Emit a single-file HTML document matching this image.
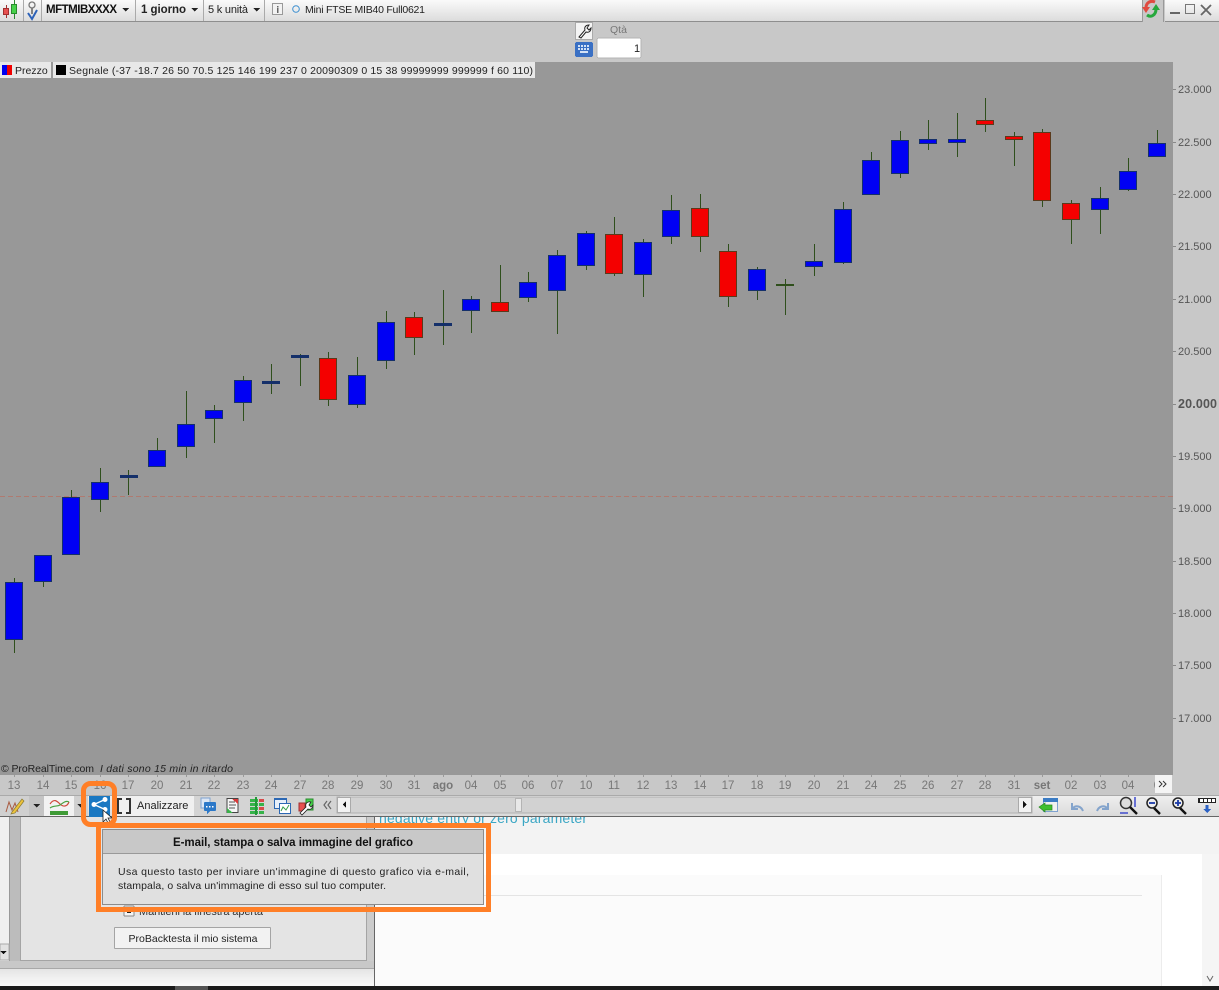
<!DOCTYPE html>
<html><head><meta charset="utf-8"><style>
html,body{margin:0;padding:0;width:1219px;height:990px;overflow:hidden;background:#fff;font-family:"Liberation Sans",sans-serif;color:#222}
svg text{font-family:"Liberation Sans",sans-serif}
</style></head><body>
<svg width="1219" height="990" viewBox="0 0 1219 990" xmlns="http://www.w3.org/2000/svg" style="position:absolute;left:0;top:0;display:block" shape-rendering="crispEdges">
<defs>
<linearGradient id="top" x1="0" y1="0" x2="0" y2="1"><stop offset="0" stop-color="#fafafa"/><stop offset="1" stop-color="#dcdcdc"/></linearGradient>
<linearGradient id="tb" x1="0" y1="0" x2="0" y2="1"><stop offset="0" stop-color="#f0f0f0"/><stop offset="1" stop-color="#dadada"/></linearGradient>
<linearGradient id="foot" x1="0" y1="0" x2="0" y2="1"><stop offset="0" stop-color="#e4e4e4"/><stop offset="1" stop-color="#fbfbfb"/></linearGradient>
</defs>

<!-- lower page -->
<rect x="0" y="817" width="1219" height="173" fill="#f3f3f3"/>
<rect x="375" y="854" width="827" height="132" fill="#fff"/>
<rect x="375" y="875" width="787" height="111" fill="#fbfbfb"/>
<rect x="375" y="895" width="767" height="1" fill="#e4e4e4"/>
<rect x="1161" y="875" width="1" height="111" fill="#ececec"/>
<rect x="1202" y="854" width="17" height="132" fill="#f5f5f5"/>
<path d="M1207 976l3 5 3-5" fill="none" stroke="#666" stroke-width="1" shape-rendering="auto"/>
<text x="379" y="823" font-size="14" fill="#3aa6c4" textLength="208">negative entry or zero parameter</text>

<!-- left panel -->
<rect x="0" y="817" width="375" height="169" fill="#e0e0e0"/>
<rect x="10" y="817" width="10" height="151" fill="#bcbcbc"/>
<rect x="0" y="817" width="10" height="144" fill="#f0f0f0"/>
<rect x="9" y="817" width="1" height="144" fill="#999"/>
<rect x="20.500" y="816.500" width="346" height="144" fill="#e4e4e4" stroke="#a4a4a4" stroke-width="1"/>
<rect x="367" y="817" width="8" height="151" fill="#cccccc"/>
<rect x="0" y="961" width="375" height="7" fill="#c8c8c8"/>
<rect x="0" y="968" width="375" height="1" fill="#a8a8a8"/>
<rect x="0" y="969" width="375" height="17" fill="url(#foot)"/>
<rect x="374" y="817" width="1" height="170" fill="#666"/>
<rect x="0" y="944" width="9" height="16" fill="#e2e2e2" stroke="#aaa"/>
<path d="M0 951h7l-3.500 3z" fill="#111"/>
<rect x="124" y="906" width="10" height="10" rx="1" fill="#f4f4f4" stroke="#888"/>
<rect x="127" y="909" width="4" height="4" fill="#222"/>
<text x="139" y="915" font-size="11" fill="#333" textLength="124">Mantieni la finestra aperta</text>
<rect x="114.500" y="927.500" width="156" height="21" rx="1" fill="#f2f2f2" stroke="#a4a4a4"/>
<text x="193" y="942" font-size="10.500" fill="#222" text-anchor="middle">ProBacktesta il mio sistema</text>
<rect x="0" y="986" width="1219" height="4" fill="#1c1c1c"/>
<rect x="175" y="986" width="33" height="4" fill="#555"/>

<!-- app frame -->
<rect x="0" y="0" width="1219" height="22" fill="#c8c8c8"/>
<rect x="0" y="0" width="1142" height="21" fill="url(#top)"/>
<rect x="0" y="21" width="1142" height="1" fill="#8e8e8e"/>
<rect x="1165" y="0" width="54" height="21" fill="url(#top)"/>
<rect x="1165" y="21" width="54" height="1" fill="#8e8e8e"/>
<rect x="1142" y="0" width="1" height="22" fill="#999"/>
<rect x="1163" y="0" width="1" height="22" fill="#999"/>
<rect x="0" y="22" width="1219" height="40" fill="#c8c8c8"/>
<rect x="1173" y="62" width="46" height="713" fill="#c8c8c8"/>
<rect x="0" y="62" width="1173" height="713" fill="#989898"/>
<rect x="0" y="775" width="1219" height="20" fill="#c8c8c8"/>
<rect x="0" y="795" width="1219" height="21" fill="url(#tb)"/>
<rect x="0" y="795" width="1219" height="1" fill="#aaa"/>
<rect x="0" y="816" width="1219" height="1" fill="#666"/>

<!-- top bar separators -->
<g fill="#aaa"><rect x="23" y="0" width="1" height="21"/><rect x="41" y="0" width="1" height="21"/><rect x="135" y="0" width="1" height="21"/><rect x="203" y="0" width="1" height="21"/><rect x="264" y="0" width="1" height="21"/></g>
<!-- candle icon -->
<path d="M6.500 5v13" stroke="#a03030"/><rect x="3.500" y="8.500" width="5" height="6" fill="#e85050" stroke="#a03030"/>
<path d="M14.500 0v19" stroke="#2a8a2e"/><rect x="11.500" y="4.500" width="5" height="9" fill="#46d24a" stroke="#2a8a2e"/>
<!-- lock/check icon -->
<g shape-rendering="auto"><circle cx="32" cy="5" r="3" fill="none" stroke="#777" stroke-width="1.300"/><path d="M32 8v6" stroke="#777" stroke-width="1.800"/><path d="M28 13l4 6 5-9" fill="none" stroke="#2d62b8" stroke-width="2"/></g>
<text x="46" y="13" font-size="11.500" font-weight="bold" fill="#111" textLength="71">MFTMIBXXXX</text>
<path d="M122 8h7l-3.500 3.500z" fill="#222"/>
<text x="141" y="13" font-size="11.500" font-weight="bold" fill="#222" textLength="45">1 giorno</text>
<path d="M191 8h7l-3.500 3.500z" fill="#222"/>
<text x="208" y="13" font-size="11" fill="#222" textLength="40">5 k unità</text>
<path d="M253 8h7l-3.500 3.500z" fill="#222"/>
<rect x="272.500" y="3.500" width="10" height="11" fill="#f2f2f2" stroke="#999"/>
<rect x="277" y="6" width="1.500" height="1.500" fill="#666"/><rect x="277" y="8" width="1.500" height="5" fill="#666"/>
<circle cx="296" cy="9" r="3.300" fill="none" stroke="#3c8fd0" stroke-width="1" shape-rendering="auto"/>
<text x="305" y="13" font-size="10.500" fill="#222" textLength="120">Mini FTSE MIB40 Full0621</text>

<!-- refresh icon + window controls -->
<g shape-rendering="auto">
<path d="M1155 2c-5-2-9 1-9 6" fill="none" stroke="#e04a40" stroke-width="3"/><path d="M1142 7h8l-4 6z" fill="#e04a40"/>
<path d="M1147 15c4 3 9 0 9-6" fill="none" stroke="#26a83c" stroke-width="3"/><path d="M1152 10h8l-4-6z" fill="#26a83c"/>
<path d="M1201 5l10 10M1211 5l-10 10" stroke="#666" stroke-width="1.800"/>
</g>
<rect x="1170" y="12" width="10" height="2" fill="#666"/>
<rect x="1185.500" y="4.500" width="9" height="9" fill="none" stroke="#777"/>

<!-- Qta area -->
<rect x="575.500" y="22.500" width="17" height="17" fill="#f4f4f4" stroke="#aaa"/>
<path d="M579 37l6-7c-1-3 1-5 4-5l-2 3 2 2 2-2c0 3-2 5-5 4l-5 6z" fill="#fff" stroke="#222" stroke-width="1" shape-rendering="auto"/>
<text x="610" y="33" font-size="10.500" fill="#777">Qtà</text>
<rect x="575" y="42" width="18" height="15" rx="2" fill="#3a70c4"/>
<g fill="#d4e2f6"><rect x="578" y="45" width="2" height="2"/><rect x="581" y="45" width="2" height="2"/><rect x="584" y="45" width="2" height="2"/><rect x="587" y="45" width="2" height="2"/><rect x="578" y="48" width="2" height="2"/><rect x="581" y="48" width="2" height="2"/><rect x="584" y="48" width="2" height="2"/><rect x="587" y="48" width="2" height="2"/><rect x="580" y="51" width="8" height="2"/></g>
<rect x="597" y="38" width="44" height="20" rx="2" fill="#fff" stroke="#b4b4b4"/>
<text x="634" y="52" font-size="11" fill="#222">1</text>

<!-- legend -->
<rect x="0" y="62" width="535" height="16" fill="#e8e8e8"/>
<rect x="51" y="62" width="2" height="16" fill="#989898"/>
<rect x="2" y="65" width="5" height="10" fill="#0000f0"/><rect x="7" y="65" width="5" height="10" fill="#f00000"/>
<text x="15" y="74" font-size="10.500" fill="#222">Prezzo</text>
<rect x="56" y="65" width="10" height="10" fill="#000"/>
<text x="69" y="74" font-size="10.500" fill="#222" textLength="464">Segnale (-37 -18.7 26 50 70.5 125 146 199 237 0 20090309 0 15 38 99999999 999999 f 60 110)</text>

<!-- dashed line -->
<line x1="0" y1="496.500" x2="1173" y2="496.500" stroke="#b07a70" stroke-width="1" stroke-dasharray="5 3"/>

<!-- candles: wicks -->
<g stroke="#2f4f1c" stroke-width="1">
<path d="M14.500 578V653M43.500 555V587M71.500 490V555M100.500 468V512M128.500 470V495M157.500 438V466M186.500 391V458M214.500 405V443M243.500 376V421M271.500 364V394M300.500 354V386M328.500 352V406M357.500 357V408M386.500 311V369M414.500 312V355M443.500 290V345M471.500 296V333M500.500 265V312M528.500 272V302M557.500 250V334M586.500 231V270M614.500 217V276M643.500 239V297M671.500 195V244M700.500 194V252M728.500 244V307M757.500 267V300M785.500 279V315M814.500 244V276M843.500 202V264M871.500 152V194M900.500 131V178M928.500 120V150M957.500 113V157M985.500 98V132M1014.500 132V166M1042.500 129V207M1071.500 200V244M1100.500 187V234M1128.500 158V191M1157.500 130V157"/>
</g>
<!-- blue bodies -->
<g fill="#0000f4" stroke="#15306a" stroke-width="1">
<rect x="5.500" y="582.500" width="17" height="57"/><rect x="34.500" y="555.500" width="17" height="26"/><rect x="62.500" y="497.500" width="17" height="57"/><rect x="91.500" y="482.500" width="17" height="17"/><rect x="148.500" y="450.500" width="17" height="16"/><rect x="177.500" y="424.500" width="17" height="22"/><rect x="205.500" y="410.500" width="17" height="8"/><rect x="234.500" y="380.500" width="17" height="22"/><rect x="348.500" y="375.500" width="17" height="29"/><rect x="377.500" y="322.500" width="17" height="38"/><rect x="462.500" y="299.500" width="17" height="11"/><rect x="519.500" y="282.500" width="17" height="15"/><rect x="548.500" y="255.500" width="17" height="35"/><rect x="577.500" y="233.500" width="17" height="32"/><rect x="634.500" y="242.500" width="17" height="32"/><rect x="662.500" y="210.500" width="17" height="26"/><rect x="748.500" y="269.500" width="17" height="21"/><rect x="805.500" y="261.500" width="17" height="5"/><rect x="834.500" y="209.500" width="17" height="53"/><rect x="862.500" y="160.500" width="17" height="34"/><rect x="891.500" y="140.500" width="17" height="33"/><rect x="919.500" y="139.500" width="17" height="4"/><rect x="948.500" y="139.500" width="17" height="3"/><rect x="1091.500" y="198.500" width="17" height="11"/><rect x="1119.500" y="171.500" width="17" height="18"/><rect x="1148.500" y="143.500" width="17" height="13"/>
</g>
<!-- dojis -->
<g fill="#15306a">
<rect x="120" y="475" width="18" height="3"/><rect x="262" y="381" width="18" height="3"/><rect x="291" y="355" width="18" height="3"/><rect x="434" y="323" width="18" height="3"/>
</g>
<rect x="776" y="284" width="18" height="2" fill="#2f4f1c"/>
<!-- red bodies -->
<g fill="#f40000" stroke="#5a3a1c" stroke-width="1">
<rect x="319.500" y="358.500" width="17" height="41"/><rect x="405.500" y="317.500" width="17" height="20"/><rect x="491.500" y="302.500" width="17" height="9"/><rect x="605.500" y="234.500" width="17" height="39"/><rect x="691.500" y="208.500" width="17" height="28"/><rect x="719.500" y="251.500" width="17" height="45"/><rect x="976.500" y="120.500" width="17" height="4"/><rect x="1005.500" y="136.500" width="17" height="3"/><rect x="1033.500" y="132.500" width="17" height="68"/><rect x="1062.500" y="203.500" width="17" height="16"/>
</g>

<!-- price axis -->
<g fill="#555" font-size="11">
<text x="1178" y="93">23.000</text><text x="1178" y="146">22.500</text><text x="1178" y="198">22.000</text><text x="1178" y="250">21.500</text><text x="1178" y="303">21.000</text><text x="1178" y="355">20.500</text><text x="1178" y="408" font-weight="bold" font-size="12.500" textLength="39">20.000</text><text x="1178" y="460">19.500</text><text x="1178" y="512">19.000</text><text x="1178" y="565">18.500</text><text x="1178" y="617">18.000</text><text x="1178" y="669">17.500</text><text x="1178" y="722">17.000</text>
</g>
<g fill="#888"><rect x="1173" y="89" width="3" height="1"/><rect x="1173" y="142" width="3" height="1"/><rect x="1173" y="194" width="3" height="1"/><rect x="1173" y="246" width="3" height="1"/><rect x="1173" y="299" width="3" height="1"/><rect x="1173" y="351" width="3" height="1"/><rect x="1173" y="404" width="3" height="1"/><rect x="1173" y="456" width="3" height="1"/><rect x="1173" y="508" width="3" height="1"/><rect x="1173" y="561" width="3" height="1"/><rect x="1173" y="613" width="3" height="1"/><rect x="1173" y="665" width="3" height="1"/><rect x="1173" y="718" width="3" height="1"/></g>

<!-- copyright -->
<text x="1" y="772" font-size="10.500" fill="#222" textLength="93">© ProRealTime.com</text>
<text x="100" y="772" font-size="10.500" font-style="italic" fill="#222" textLength="133">I dati sono 15 min in ritardo</text>

<!-- date axis -->
<path d="M14.500 775v2M43.500 775v2M71.500 775v2M100.500 775v2M128.500 775v2M157.500 775v2M186.500 775v2M214.500 775v2M243.500 775v2M271.500 775v2M300.500 775v2M328.500 775v2M357.500 775v2M386.500 775v2M414.500 775v2M443.500 775v2M471.500 775v2M500.500 775v2M528.500 775v2M557.500 775v2M586.500 775v2M614.500 775v2M643.500 775v2M671.500 775v2M700.500 775v2M728.500 775v2M757.500 775v2M785.500 775v2M814.500 775v2M843.500 775v2M871.500 775v2M900.500 775v2M928.500 775v2M957.500 775v2M985.500 775v2M1014.500 775v2M1042.500 775v2M1071.500 775v2M1100.500 775v2M1128.500 775v2" stroke="#999"/>
<g fill="#777" font-size="11.500" text-anchor="middle">
<text x="14" y="789">13</text><text x="43" y="789">14</text><text x="71" y="789">15</text><text x="100" y="789">16</text><text x="128" y="789">17</text><text x="157" y="789">20</text><text x="186" y="789">21</text><text x="214" y="789">22</text><text x="243" y="789">23</text><text x="271" y="789">24</text><text x="300" y="789">27</text><text x="328" y="789">28</text><text x="357" y="789">29</text><text x="386" y="789">30</text><text x="414" y="789">31</text><text x="443" y="789" font-weight="bold">ago</text><text x="471" y="789">04</text><text x="500" y="789">05</text><text x="528" y="789">06</text><text x="557" y="789">07</text><text x="586" y="789">10</text><text x="614" y="789">11</text><text x="643" y="789">12</text><text x="671" y="789">13</text><text x="700" y="789">14</text><text x="728" y="789">17</text><text x="757" y="789">18</text><text x="785" y="789">19</text><text x="814" y="789">20</text><text x="843" y="789">21</text><text x="871" y="789">24</text><text x="900" y="789">25</text><text x="928" y="789">26</text><text x="957" y="789">27</text><text x="985" y="789">28</text><text x="1014" y="789">31</text><text x="1042" y="789" font-weight="bold">set</text><text x="1071" y="789">02</text><text x="1100" y="789">03</text><text x="1128" y="789">04</text><text x="1157" y="789">0</text>
</g>
<rect x="1155" y="775" width="17" height="18" fill="#f4f4f4"/>
<path d="M1159 781l3 3-3 3M1163 781l3 3-3 3" fill="none" stroke="#333" shape-rendering="auto"/>

<!-- bottom toolbar -->
<rect x="0" y="796" width="29" height="20" fill="#d0d0d0"/>
<rect x="29" y="796" width="15" height="20" fill="#c4c4c4"/>
<rect x="44" y="796" width="30" height="20" fill="#f2f2f2"/>
<rect x="74" y="796" width="14" height="20" fill="#d0d0d0"/>
<rect x="116" y="796" width="78" height="20" fill="#f0f0f0"/>
<rect x="194" y="796" width="146" height="20" fill="#d4d4d4"/>
<g shape-rendering="auto">
<path d="M6 812l3-10 3 8 3-7 3 9" fill="none" stroke="#a85a40" stroke-width="1"/>
<path d="M12 812l10-13 2 2-9 12-4 1z" fill="#ecc23c" stroke="#8a7a30" stroke-width=".7"/>
<path d="M50 804c4-6 7-3 10 0s7 3 9-2" fill="none" stroke="#d04a3c" stroke-width="1.200"/>
<path d="M50 808c4-3 7-1 10-3s6-5 9-3" fill="none" stroke="#49a13f" stroke-width="1.200"/>
</g>
<path d="M50 811h18v4H50z" fill="#3f9b36"/>
<path d="M33 804h7l-3.500 3.500z" fill="#222"/>
<path d="M77 804h7l-3.500 3.500z" fill="#222"/>
<rect x="89" y="796" width="21" height="21" fill="#1a78c2"/>
<g shape-rendering="auto">
<circle cx="94" cy="804.500" r="2.500" fill="#fff"/><circle cx="105" cy="799.500" r="2.500" fill="#fff"/><circle cx="105" cy="809.500" r="2.500" fill="#fff"/>
<path d="M94 804.500L105 799.500M94 804.500L105 809.500" stroke="#fff" stroke-width="1.300"/>
<path d="M103 810v12l3-3 2 4 2-1-2-4h4z" fill="#fff" stroke="#222" stroke-width=".8"/>
</g>
<path d="M122 799h-4v14h4M126 799h4v14h-4" fill="none" stroke="#333" stroke-width="2"/>
<text x="137" y="809" font-size="11" fill="#222">Analizzare</text>
<!-- mini icons -->
<rect x="201" y="798" width="9" height="10" fill="#dce6f4" stroke="#7ea2d0"/>
<rect x="204" y="802" width="12" height="9" rx="1.500" fill="#2c78c8"/>
<path d="M207 811v3l3-3z" fill="#2c78c8"/>
<g fill="#fff"><rect x="206" y="806" width="1.500" height="1.500"/><rect x="209" y="806" width="1.500" height="1.500"/><rect x="212" y="806" width="1.500" height="1.500"/></g>
<rect x="227" y="798.500" width="11" height="14" fill="#f6f6f6" stroke="#444"/>
<path d="M232 799h6v5z" fill="#d83a3a"/><path d="M227 813v-5l6 5z" fill="#3bb04a"/>
<path d="M229 802h6M229 805h7M229 808h6" stroke="#555"/>
<g fill="#37b34a"><rect x="250" y="799" width="8" height="3"/><rect x="250" y="803" width="8" height="3"/><rect x="250" y="807" width="8" height="3"/><rect x="250" y="811" width="8" height="3"/></g>
<g fill="#d84a4a"><rect x="259" y="799" width="5" height="3"/><rect x="259" y="807" width="5" height="3"/></g>
<g fill="#37b34a"><rect x="259" y="803" width="5" height="3"/><rect x="259" y="811" width="5" height="3"/></g>
<rect x="255" y="797" width="2" height="18" fill="#229a38"/>
<rect x="274.500" y="798.500" width="12" height="10" fill="#e8f0fa" stroke="#2c68b4"/>
<rect x="279.500" y="803.500" width="11" height="10" fill="#fff" stroke="#2c68b4"/>
<rect x="275" y="798" width="12" height="2" fill="#2c68b4"/>
<path d="M281 811l2-4 3 3 3-5" fill="none" stroke="#36a04a" shape-rendering="auto"/>
<rect x="299" y="803" width="6" height="8" fill="#e85050" stroke="#a03030"/>
<rect x="306" y="799" width="7" height="11" fill="#46d24a" stroke="#2a8a2e"/>
<path d="M300 813l6-6c-1-3 1-6 5-5l-2 3 2 2 2-2c0 3-2 5-5 4l-6 6z" fill="#fff" stroke="#222" stroke-width=".8" shape-rendering="auto"/>
<path d="M327 801l-3 4 3 4M331 801l-3 4 3 4" fill="none" stroke="#666" stroke-width="1.200" shape-rendering="auto"/>
<!-- scrollbar -->
<rect x="337" y="797" width="695" height="16" fill="#d2d2d2" stroke="#b0b0b0"/>
<rect x="337.500" y="797.500" width="13" height="15" fill="#f2f2f2" stroke="#aaa"/>
<path d="M346 801v7l-3.500-3.500z" fill="#111"/>
<rect x="1018.500" y="797.500" width="13" height="15" fill="#f2f2f2" stroke="#aaa"/>
<path d="M1023 801v7l3.500-3.500z" fill="#111"/>
<rect x="515.500" y="798.500" width="6" height="13" fill="#e8e8e8" stroke="#b4b4b4"/>
<!-- right icons -->
<rect x="1043.500" y="798.500" width="14" height="13" fill="#f0f0f0" stroke="#7ea2d0"/>
<rect x="1043" y="798" width="15" height="4" fill="#3b7cc4"/>
<path d="M1039 807l6-4v2h7v5h-7v2z" fill="#3fbf2e" stroke="#2a8a20" stroke-width=".7" shape-rendering="auto"/>
<g shape-rendering="auto" fill="none">
<path d="M1083 811c-2-5-7-6-10-3M1072 803v6h6" stroke="#84a4cc" stroke-width="2"/>
<path d="M1097 811c2-5 7-6 10-3M1108 803v6h-6" stroke="#84a4cc" stroke-width="2"/>
<circle cx="1126" cy="803" r="5.500" fill="#ddd" stroke="#333" stroke-width="1.500"/>
<path d="M1130 807l7 7M1154 808l6 6M1180 808l6 6" stroke="#111" stroke-width="2.400"/>
<path d="M1135 797v10M1120 813h8" stroke="#2230c8" stroke-width="1.300"/>
<circle cx="1152" cy="803" r="5" fill="#eee" stroke="#222" stroke-width="1.500"/>
<path d="M1149 803h6" stroke="#1a3aa8" stroke-width="1.800"/>
<circle cx="1178" cy="803" r="5" fill="#eee" stroke="#222" stroke-width="1.500"/>
<path d="M1175 803h6M1178 800v6" stroke="#1a3aa8" stroke-width="1.800"/>
</g>
<rect x="1198" y="798" width="18" height="5" fill="#222"/>
<g fill="#fff"><rect x="1200" y="799" width="3" height="3"/><rect x="1204" y="799" width="3" height="3"/><rect x="1208" y="799" width="3" height="3"/><rect x="1212" y="799" width="3" height="3"/></g>
<path d="M1205.500 805h3v4h2.500l-4 4-4-4h2.500z" fill="#2c62c4"/>

<!-- tooltip -->
<rect x="102.500" y="829.500" width="381" height="75" fill="#e0e0e0" stroke="#8c8c8c"/>
<rect x="103" y="830" width="380" height="23" fill="#c8c8c8"/>
<rect x="103" y="853" width="380" height="1" fill="#999"/>
<text x="173" y="846" font-size="11.500" font-weight="bold" fill="#111" textLength="240">E-mail, stampa o salva immagine del grafico</text>
<text x="118" y="875" font-size="10.500" fill="#222" textLength="351">Usa questo tasto per inviare un'immagine di questo grafico via e-mail,</text>
<text x="118" y="889" font-size="10.500" fill="#222" textLength="268">stampala, o salva un'immagine di esso sul tuo computer.</text>

<!-- orange highlights -->
<rect x="98.500" y="825.500" width="390" height="84" fill="none" stroke="#ff7f27" stroke-width="5" shape-rendering="auto"/>
<rect x="83.500" y="783.500" width="31" height="41" rx="7" fill="none" stroke="#ff7f27" stroke-width="5" shape-rendering="auto"/>
</svg>
</body></html>
